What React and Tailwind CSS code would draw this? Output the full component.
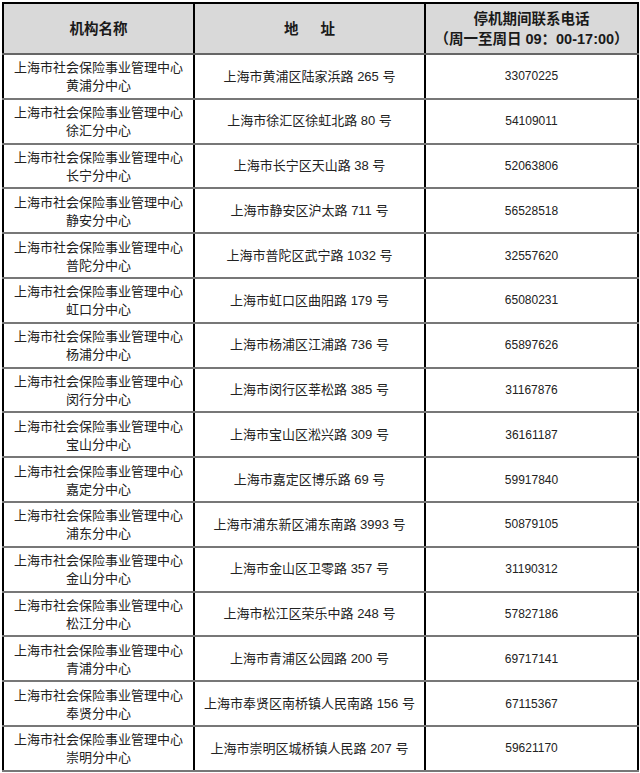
import React from 'react';

const rows = [
  ['黄浦分中心', '上海市黄浦区陆家浜路 265 号', '33070225'],
  ['徐汇分中心', '上海市徐汇区徐虹北路 80 号', '54109011'],
  ['长宁分中心', '上海市长宁区天山路 38 号', '52063806'],
  ['静安分中心', '上海市静安区沪太路 711 号', '56528518'],
  ['普陀分中心', '上海市普陀区武宁路 1032 号', '32557620'],
  ['虹口分中心', '上海市虹口区曲阳路 179 号', '65080231'],
  ['杨浦分中心', '上海市杨浦区江浦路 736 号', '65897626'],
  ['闵行分中心', '上海市闵行区莘松路 385 号', '31167876'],
  ['宝山分中心', '上海市宝山区淞兴路 309 号', '36161187'],
  ['嘉定分中心', '上海市嘉定区博乐路 69 号', '59917840'],
  ['浦东分中心', '上海市浦东新区浦东南路 3993 号', '50879105'],
  ['金山分中心', '上海市金山区卫零路 357 号', '31190312'],
  ['松江分中心', '上海市松江区荣乐中路 248 号', '57827186'],
  ['青浦分中心', '上海市青浦区公园路 200 号', '69717141'],
  ['奉贤分中心', '上海市奉贤区南桥镇人民南路 156 号', '67115367'],
  ['崇明分中心', '上海市崇明区城桥镇人民路 207 号', '59621170'],
];

const font = { fontFamily: '"Liberation Sans", "Noto Sans CJK SC", sans-serif' };

export default function App() {
  return (
    <div className="bg-white w-[640px] h-[773px] pt-[2px] pl-[2px]" style={font}>
      <table className="border-collapse table-fixed w-[635px] text-[#222]">
        <colgroup>
          <col className="w-[191px]" />
          <col className="w-[231px]" />
          <col className="w-[213px]" />
        </colgroup>
        <thead>
          <tr className="h-[51px] bg-[#d9d9d9]">
            <th className="border-2 border-black border-b-[#666] text-[14.5px] font-bold leading-5 text-[#1a1a1a]">机构名称</th>
            <th className="border-2 border-black border-b-[#666] text-[14.5px] font-bold leading-5 text-[#1a1a1a]">
              地<span className="inline-block w-[22px]"></span>址
            </th>
            <th className="border-2 border-black border-b-[#666] text-[14.5px] font-bold leading-5 text-[#1a1a1a]">
              <div>停机期间联系电话</div>
              <div>（周一至周日 09：00-17:00）</div>
            </th>
          </tr>
        </thead>
        <tbody>
          {rows.map((r, i) => (
            <tr key={i} className="h-[44.8px]">
              <td className="border-x-2 border-x-black border-b-2 border-b-[#777] text-center text-[13px] leading-[18px] pt-[2px]">
                <div>上海市社会保险事业管理中心</div>
                <div>{r[0]}</div>
              </td>
              <td className="border-x-2 border-x-black border-b-2 border-b-[#777] text-center text-[13px]">{r[1]}</td>
              <td className="border-x-2 border-x-black border-b-2 border-b-[#777] text-center text-[12px]">{r[2]}</td>
            </tr>
          ))}
        </tbody>
      </table>
    </div>
  );
}
